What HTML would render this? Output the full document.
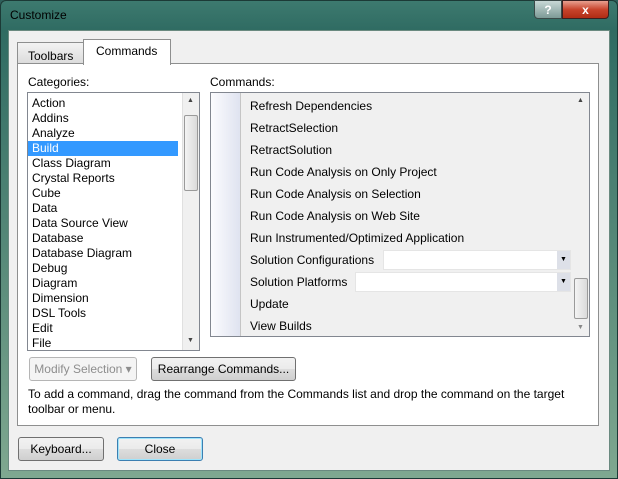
<!DOCTYPE html><html><head><style>
*{box-sizing:border-box;margin:0;padding:0}
body{width:618px;height:479px;overflow:hidden;background:#2e5f5a;font-family:"Liberation Sans",sans-serif;font-size:12px;color:#000;position:relative}
.a{position:absolute}
.frame{left:0;top:0;width:618px;height:479px;background:linear-gradient(180deg,#3d7a6f 0,#2f6b62 30px,#7fa890 100%);border:1px solid #1c3a36;border-radius:6px 6px 0 0}
.client{left:8px;top:30px;width:602px;height:441px;background:#f0f0f0;border:1px solid #6a8a80}
.panel{left:17px;top:63px;width:582px;height:363px;background:#fff;border:1px solid #8e8f8f}
.btn{border:1px solid #707070;border-radius:3px;background:linear-gradient(#f2f2f2,#ebebeb 50%,#dddddd 51%,#cfcfcf);text-align:center;line-height:22px}
.list{background:#fff;border:1px solid #828790}
.sb{background:#f0f0f0;border-left:1px solid #e0e0e0}
.ci{position:absolute;left:0;width:150px;height:15px;line-height:15px;padding-left:4px}
.cm{position:absolute;left:39px;height:22px;line-height:22px}
.dd{background:#fff;border:1px solid #e5e5e5}
</style></head><body>
<div class="a frame"></div>
<div class="a" style="left:10px;top:8px;color:#000;font-size:12px">Customize</div>
<div class="a" style="left:534px;top:0;width:28px;height:19px;border:1px solid #3a4a48;border-radius:0 0 0 4px;background:linear-gradient(#c8d8d6,#7d9a96);color:#fff;text-align:center;font-weight:bold;line-height:18px">?</div>
<div class="a" style="left:562px;top:0;width:47px;height:19px;border:1px solid #3a2020;border-radius:0 0 4px 0;background:linear-gradient(#e8a090,#c8442c 50%,#b02c14);color:#fff;text-align:center;font-weight:bold;line-height:18px">x</div>
<div class="a client"></div>
<div class="a" style="left:17px;top:42px;width:67px;height:22px;border:1px solid #8e8f8f;background:linear-gradient(#f3f3f3,#dcdcdc);padding:6px 0 0 10px">Toolbars</div>
<div class="a panel"></div>
<div class="a" style="left:83px;top:39px;width:88px;height:26px;border:1px solid #8e8f8f;border-bottom:none;background:#fff;padding:4px 0 0 12px">Commands</div>
<div class="a" style="left:28px;top:75px">Categories:</div>
<div class="a" style="left:210px;top:75px">Commands:</div>
<div class="a list" style="left:27px;top:92px;width:173px;height:259px;overflow:hidden">
<div class="ci" style="top:3px">Action</div><div class="ci" style="top:18px">Addins</div><div class="ci" style="top:33px">Analyze</div>
<div class="ci" style="top:48px;background:#3399ff;color:#fff">Build</div>
<div class="ci" style="top:63px">Class Diagram</div><div class="ci" style="top:78px">Crystal Reports</div><div class="ci" style="top:93px">Cube</div><div class="ci" style="top:108px">Data</div><div class="ci" style="top:123px">Data Source View</div><div class="ci" style="top:138px">Database</div><div class="ci" style="top:153px">Database Diagram</div><div class="ci" style="top:168px">Debug</div><div class="ci" style="top:183px">Diagram</div><div class="ci" style="top:198px">Dimension</div><div class="ci" style="top:213px">DSL Tools</div><div class="ci" style="top:228px">Edit</div><div class="ci" style="top:243px">File</div>
<div class="a sb" style="left:154px;top:0;width:17px;height:257px"><div class="a" style="left:4px;top:4px;font-size:7px;color:#444">▲</div><div class="a" style="left:1px;top:22px;width:14px;height:76px;border:1px solid #9a9a9a;border-radius:2px;background:linear-gradient(90deg,#f4f4f4,#dadada)"></div><div class="a" style="left:4px;top:244px;font-size:7px;color:#444">▼</div></div>
</div>
<div class="a list" style="left:210px;top:92px;width:380px;height:245px;background:#f0f0f0;overflow:hidden">
<div class="a" style="left:0;top:0;width:30px;height:245px;background:linear-gradient(90deg,#fcfcfe,#dfe3f0);border-right:1px solid #c5c5c5"></div>
<div class="cm" style="top:2px">Refresh Dependencies</div><div class="cm" style="top:24px">RetractSelection</div><div class="cm" style="top:46px">RetractSolution</div><div class="cm" style="top:68px">Run Code Analysis on Only Project</div><div class="cm" style="top:90px">Run Code Analysis on Selection</div><div class="cm" style="top:112px">Run Code Analysis on Web Site</div><div class="cm" style="top:134px">Run Instrumented/Optimized Application</div><div class="cm" style="top:156px">Solution Configurations</div><div class="cm" style="top:178px">Solution Platforms</div><div class="cm" style="top:200px">Update</div><div class="cm" style="top:222px">View Builds</div>
<div class="a dd" style="left:172px;top:157px;width:188px;height:20px"><div class="a" style="right:0;top:0;width:13px;height:18px;background:#dde0e8;font-size:7px;text-align:center;line-height:18px">▼</div></div>
<div class="a dd" style="left:144px;top:179px;width:216px;height:20px"><div class="a" style="right:0;top:0;width:13px;height:18px;background:#dde0e8;font-size:7px;text-align:center;line-height:18px">▼</div></div>
<div class="a" style="left:362px;top:0;width:17px;height:245px;background:#f0f0f0"><div class="a" style="left:4px;top:4px;font-size:7px;color:#444">▲</div><div class="a" style="left:1px;top:185px;width:14px;height:41px;border:1px solid #9a9a9a;border-radius:2px;background:linear-gradient(90deg,#f4f4f4,#dadada)"></div><div class="a" style="left:4px;top:231px;font-size:7px;color:#888">▼</div></div>
</div>
<div class="a btn" style="left:29px;top:357px;width:108px;height:24px;color:#8d8d8d;border-color:#b5b5b5;background:#f4f4f4">Modify Selection ▾</div>
<div class="a btn" style="left:151px;top:357px;width:145px;height:24px">Rearrange Commands...</div>
<div class="a" style="left:28px;top:387px;width:560px;line-height:15px">To add a command, drag the command from the Commands list and drop the command on the target toolbar or menu.</div>
<div class="a btn" style="left:18px;top:437px;width:86px;height:24px">Keyboard...</div>
<div class="a btn" style="left:117px;top:437px;width:86px;height:24px;border-color:#3c7fb1;box-shadow:inset 0 0 0 1px #9fe4fb">Close</div>
</body></html>
